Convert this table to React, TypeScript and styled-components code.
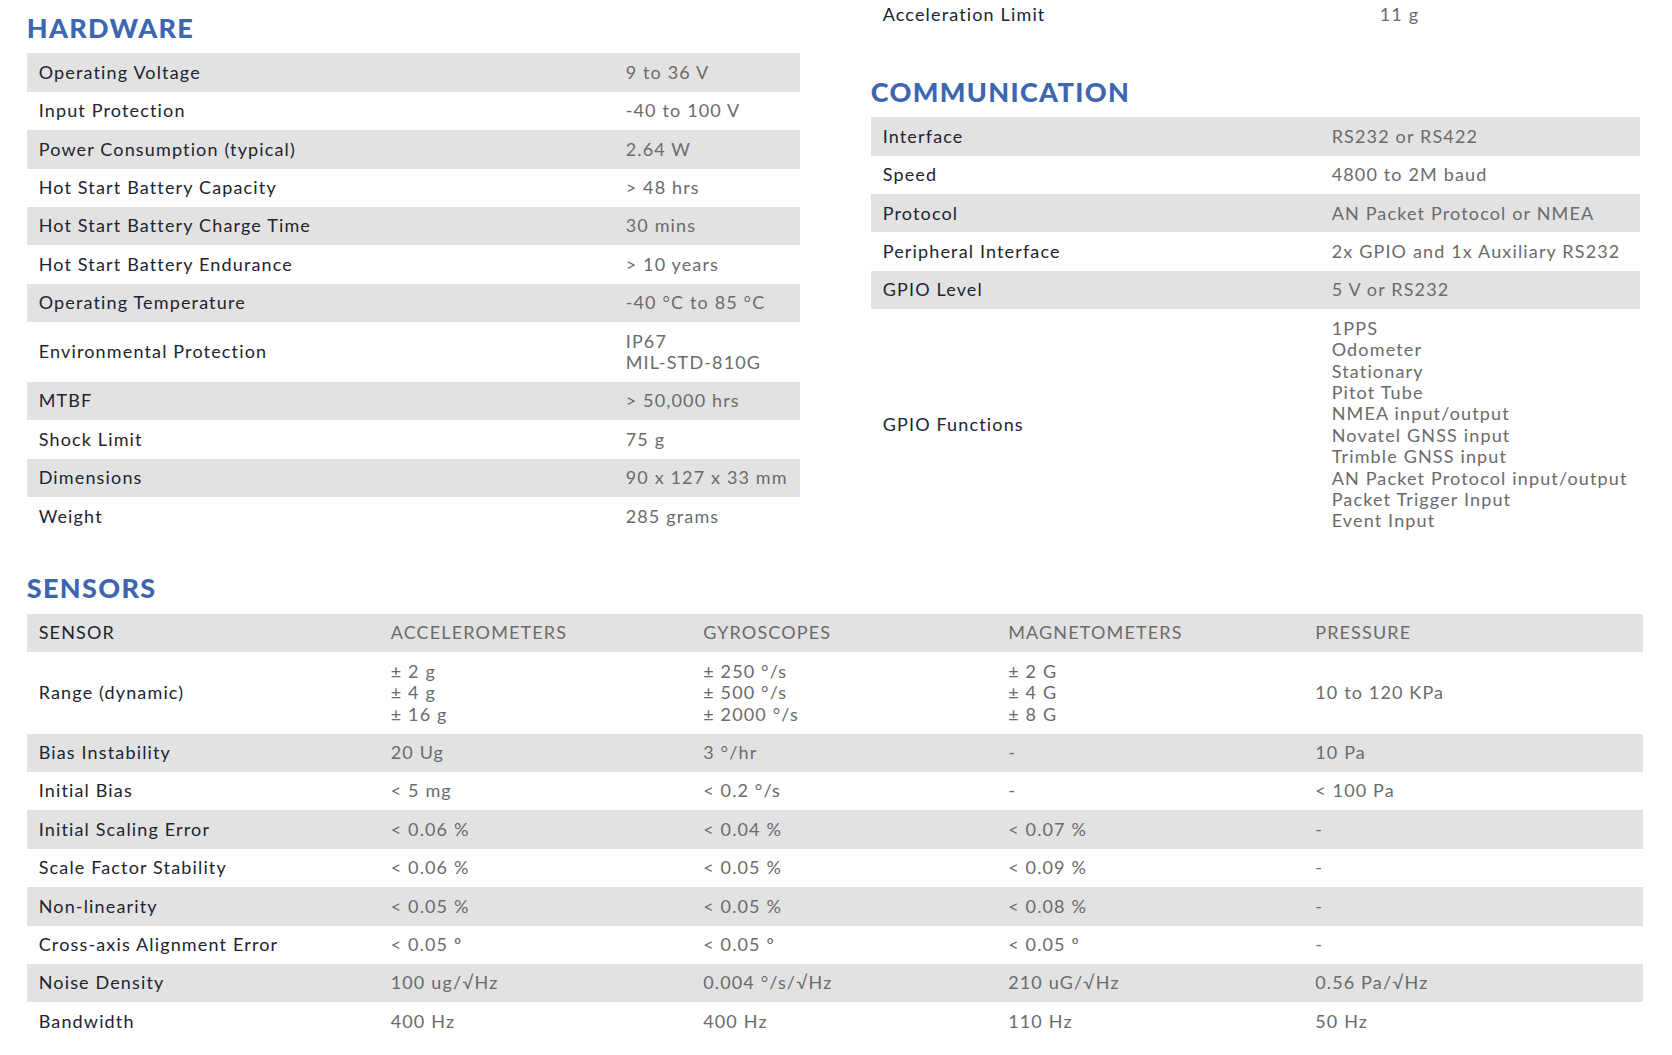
import React from "react";
import styled, { createGlobalStyle } from "styled-components";

const GlobalStyle = createGlobalStyle`
  html, body {
    margin: 0;
    padding: 0;
    background: #ffffff;
    overflow: hidden;
  }
  body {
    font-family: "Lato", "Open Sans", sans-serif;
  }
`;

const Page = styled.div`
  width: 1672px;
  height: 1055px;
  box-sizing: border-box;
  padding: 0 0 0 26.7px;
  overflow: hidden;
  font-family: "Lato", "Open Sans", sans-serif;
  font-size: 18px;
  letter-spacing: 1.15px;
`;

const TopGrid = styled.div`
  display: grid;
  grid-template-columns: 773px 768px;
  column-gap: 71px;
  align-items: start;
`;

const Column = styled.div<{ $offset?: number }>`
  display: flex;
  flex-direction: column;
  margin-top: ${(p) => p.$offset ?? 0}px;
`;

const Section = styled.section<{ $gap?: number }>`
  display: flex;
  flex-direction: column;
  margin-top: ${(p) => p.$gap ?? 0}px;
`;

const Title = styled.h2`
  margin: 0 0 10.6px 0;
  font-family: "Lato", sans-serif;
  font-weight: 900;
  font-size: 27px;
  line-height: 30px;
  letter-spacing: 1.35px;
  color: #3d66b0;
  text-transform: uppercase;
`;

const Table = styled.div<{ $cols: string; $width?: string }>`
  display: grid;
  grid-template-columns: ${(p) => p.$cols};
  width: ${(p) => p.$width ?? "100%"};
`;

const Row = styled.div<{ $shade?: boolean }>`
  display: contents;
  & > div {
    background: ${(p) => (p.$shade ? "#e2e2e2" : "#ffffff")};
  }
`;

const Cell = styled.div<{ $muted?: boolean }>`
  display: flex;
  align-items: center;
  padding: 8.5px 12px;
  line-height: 21.4px;
  color: ${(p) => (p.$muted ? "#6b6b6b" : "#21242e")};
  white-space: nowrap;
`;

const Lines = styled.div`
  display: flex;
  flex-direction: column;
`;

type Pair = [string, string | string[]];

const hardware: Pair[] = [
  ["Operating Voltage", "9 to 36 V"],
  ["Input Protection", "-40 to 100 V"],
  ["Power Consumption (typical)", "2.64 W"],
  ["Hot Start Battery Capacity", "> 48 hrs"],
  ["Hot Start Battery Charge Time", "30 mins"],
  ["Hot Start Battery Endurance", "> 10 years"],
  ["Operating Temperature", "-40 °C to 85 °C"],
  ["Environmental Protection", ["IP67", "MIL-STD-810G"]],
  ["MTBF", "> 50,000 hrs"],
  ["Shock Limit", "75 g"],
  ["Dimensions", "90 x 127 x 33 mm"],
  ["Weight", "285 grams"],
];

const communication: Pair[] = [
  ["Interface", "RS232 or RS422"],
  ["Speed", "4800 to 2M baud"],
  ["Protocol", "AN Packet Protocol or NMEA"],
  ["Peripheral Interface", "2x GPIO and 1x Auxiliary RS232"],
  ["GPIO Level", "5 V or RS232"],
  [
    "GPIO Functions",
    [
      "1PPS",
      "Odometer",
      "Stationary",
      "Pitot Tube",
      "NMEA input/output",
      "Novatel GNSS input",
      "Trimble GNSS input",
      "AN Packet Protocol input/output",
      "Packet Trigger Input",
      "Event Input",
    ],
  ],
];

type SensorRow = [string, ...(string | string[])[]];

const sensorHeader = ["SENSOR", "ACCELEROMETERS", "GYROSCOPES", "MAGNETOMETERS", "PRESSURE"];

const sensors: SensorRow[] = [
  ["Range (dynamic)", ["± 2 g", "± 4 g", "± 16 g"], ["± 250 °/s", "± 500 °/s", "± 2000 °/s"], ["± 2 G", "± 4 G", "± 8 G"], "10 to 120 KPa"],
  ["Bias Instability", "20 Ug", "3 °/hr", "-", "10 Pa"],
  ["Initial Bias", "< 5 mg", "< 0.2 °/s", "-", "< 100 Pa"],
  ["Initial Scaling Error", "< 0.06 %", "< 0.04 %", "< 0.07 %", "-"],
  ["Scale Factor Stability", "< 0.06 %", "< 0.05 %", "< 0.09 %", "-"],
  ["Non-linearity", "< 0.05 %", "< 0.05 %", "< 0.08 %", "-"],
  ["Cross-axis Alignment Error", "< 0.05 º", "< 0.05 º", "< 0.05 º", "-"],
  ["Noise Density", "100 ug/√Hz", "0.004 °/s/√Hz", "210 uG/√Hz", "0.56 Pa/√Hz"],
  ["Bandwidth", "400 Hz", "400 Hz", "110 Hz", "50 Hz"],
];

const Value: React.FC<{ v: string | string[] }> = ({ v }) =>
  Array.isArray(v) ? (
    <Lines>
      {v.map((line) => (
        <span key={line}>{line}</span>
      ))}
    </Lines>
  ) : (
    <>{v}</>
  );

const SpecTable: React.FC<{ rows: Pair[]; cols: string; shadeFirst?: boolean }> = ({
  rows,
  cols,
  shadeFirst = true,
}) => (
  <Table $cols={cols}>
    {rows.map(([label, value], i) => (
      <Row key={label} $shade={shadeFirst ? i % 2 === 0 : i % 2 === 1}>
        <Cell>{label}</Cell>
        <Cell $muted>
          <Value v={value} />
        </Cell>
      </Row>
    ))}
  </Table>
);

export default function App() {
  return (
    <Page>
      <GlobalStyle />
      <TopGrid>
        <Column>
          <Section $gap={12.7}>
            <Title>Hardware</Title>
            <SpecTable rows={hardware} cols="587px 1fr" />
          </Section>
        </Column>
        <Column $offset={-4.8}>
          <SpecTable rows={[["Acceleration Limit", "11 g"]]} cols="497px 1fr" shadeFirst={false} />
          <Section $gap={43}>
            <Title>Communication</Title>
            <SpecTable rows={communication} cols="449px 1fr" />
          </Section>
        </Column>
      </TopGrid>
      <Section $gap={33}>
        <Title>Sensors</Title>
        <Table $cols="352px 312.5px 305px 307px 1fr" $width="1616px">
          <Row $shade>
            {sensorHeader.map((h, i) => (
              <Cell key={h} $muted={i > 0}>
                {h}
              </Cell>
            ))}
          </Row>
          {sensors.map(([label, ...vals], i) => (
            <Row key={label} $shade={i % 2 === 1}>
              <Cell>{label}</Cell>
              {vals.map((v, j) => (
                <Cell key={j} $muted>
                  <Value v={v} />
                </Cell>
              ))}
            </Row>
          ))}
        </Table>
      </Section>
    </Page>
  );
}
